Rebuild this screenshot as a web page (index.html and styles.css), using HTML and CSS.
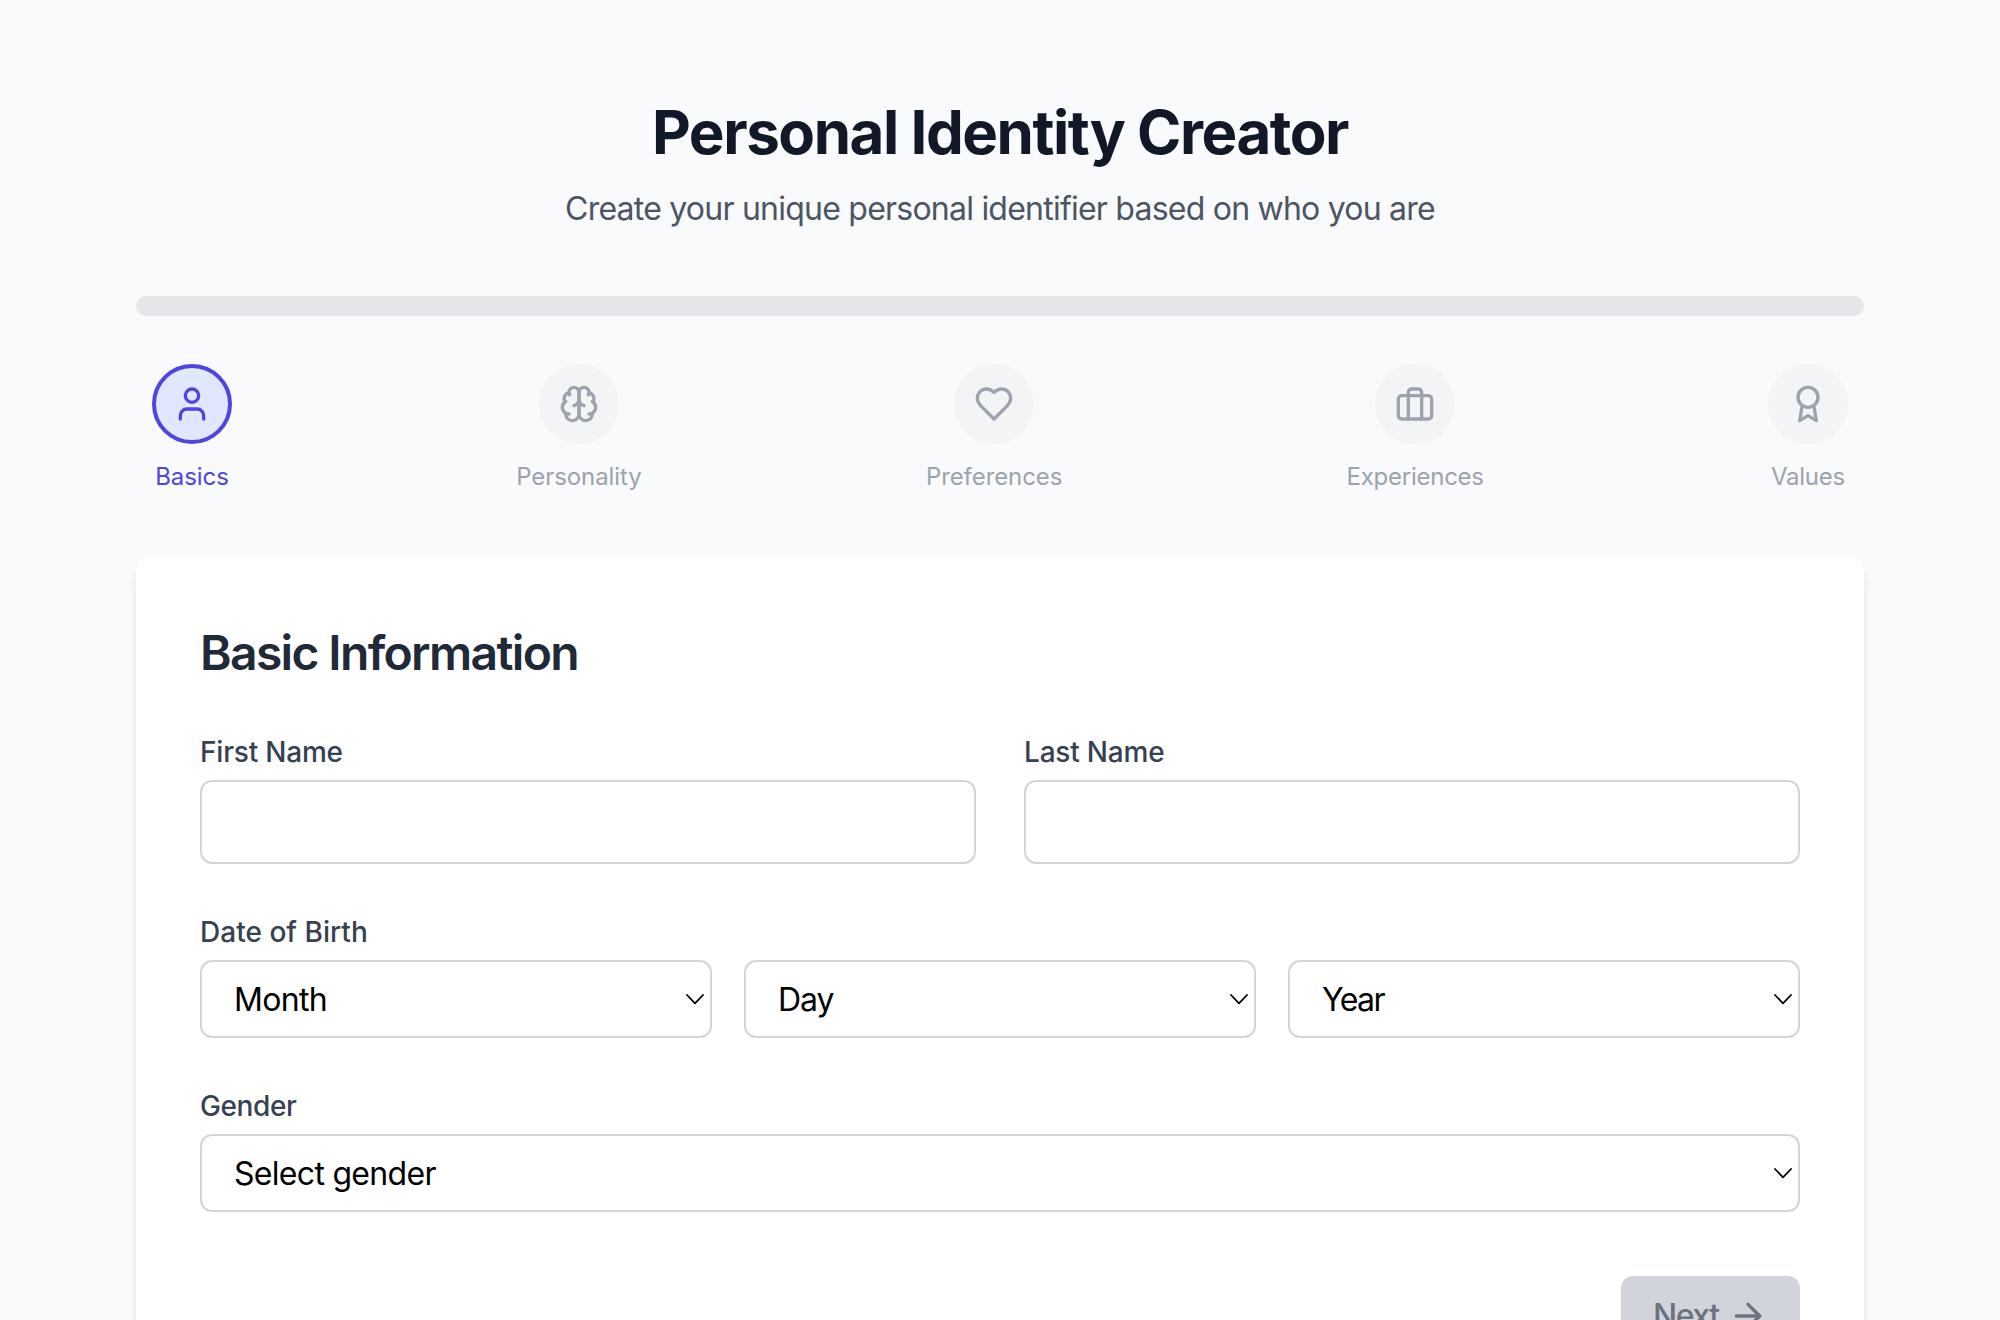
FILE: index.html
```html
<!DOCTYPE html>
<html lang="en">
<head>
<meta charset="utf-8">
<title>Personal Identity Creator</title>
<link rel="stylesheet" href="styles.css">
</head>
<body>
<main class="page">
  <header class="header">
    <h1 class="title">Personal Identity Creator</h1>
    <p class="subtitle">Create your unique personal identifier based on who you are</p>
  </header>
  <div class="progress"></div>
  <nav class="steps">
    <div class="step active">
      <span class="circle"><svg class="icon" viewBox="0 0 24 24"><path d="M19 21v-2a4 4 0 0 0-4-4H9a4 4 0 0 0-4 4v2"/><circle cx="12" cy="7" r="4"/></svg></span>
      <span class="step-label">Basics</span>
    </div>
    <div class="step">
      <span class="circle"><svg class="icon" viewBox="0 0 24 24"><path d="M12 5a3 3 0 1 0-5.997.125 4 4 0 0 0-2.526 5.77 4 4 0 0 0 .556 6.588A4 4 0 1 0 12 18Z"/><path d="M12 5a3 3 0 1 1 5.997.125 4 4 0 0 1 2.526 5.77 4 4 0 0 1-.556 6.588A4 4 0 1 1 12 18Z"/><path d="M15 13a4.500 4.500 0 0 1-3-4 4.500 4.500 0 0 1-3 4"/><path d="M17.599 6.500a3 3 0 0 0 .399-1.375"/><path d="M6.003 5.125A3 3 0 0 0 6.401 6.500"/><path d="M3.477 10.896a4 4 0 0 1 .585-.396"/><path d="M19.938 10.500a4 4 0 0 1 .585.396"/><path d="M6 18a4 4 0 0 1-1.967-.516"/><path d="M19.967 17.484A4 4 0 0 1 18 18"/></svg></span>
      <span class="step-label">Personality</span>
    </div>
    <div class="step">
      <span class="circle"><svg class="icon" viewBox="0 0 24 24"><path d="M19 14c1.490-1.460 3-3.210 3-5.500A5.500 5.500 0 0 0 16.500 3c-1.760 0-3 .5-4.500 2-1.500-1.500-2.740-2-4.500-2A5.500 5.500 0 0 0 2 8.500c0 2.300 1.500 4.050 3 5.500l7 7Z"/></svg></span>
      <span class="step-label">Preferences</span>
    </div>
    <div class="step">
      <span class="circle"><svg class="icon" viewBox="0 0 24 24"><path d="M16 21V5a2 2 0 0 0-2-2h-4a2 2 0 0 0-2 2v16"/><rect x="2" y="7" width="20" height="14" rx="2"/></svg></span>
      <span class="step-label tight">Experiences</span>
    </div>
    <div class="step">
      <span class="circle"><svg class="icon" viewBox="0 0 24 24"><circle cx="12" cy="8" r="6"/><path d="M15.477 12.890 17 22l-5-3-5 3 1.523-9.110"/></svg></span>
      <span class="step-label tight">Values</span>
    </div>
  </nav>
  <form class="card">
    <h2 class="card-title">Basic Information</h2>
    <div class="row two">
      <div class="field">
        <label class="label" for="first">First Name</label>
        <input class="input" id="first" type="text">
      </div>
      <div class="field">
        <label class="label" for="last">Last Name</label>
        <input class="input" id="last" type="text">
      </div>
    </div>
    <div class="field">
      <label class="label birth" for="month">Date of Birth</label>
      <div class="row three">
        <div class="select-wrap">
          <select class="select" id="month"><option>Month</option></select>
          <svg class="chevron" viewBox="0 0 18 12"><path d="M1 2 9 10.300 17 2"/></svg>
        </div>
        <div class="select-wrap">
          <select class="select day"><option>Day</option></select>
          <svg class="chevron" viewBox="0 0 18 12"><path d="M1 2 9 10.300 17 2"/></svg>
        </div>
        <div class="select-wrap">
          <select class="select year"><option>Year</option></select>
          <svg class="chevron" viewBox="0 0 18 12"><path d="M1 2 9 10.300 17 2"/></svg>
        </div>
      </div>
    </div>
    <div class="field">
      <label class="label gender" for="gender">Gender</label>
      <div class="select-wrap">
        <select class="select" id="gender"><option>Select gender</option></select>
        <svg class="chevron" viewBox="0 0 18 12"><path d="M1 2 9 10.300 17 2"/></svg>
      </div>
    </div>
    <div class="actions">
      <button class="next" type="button" disabled><span class="next-text">Next</span><svg class="icon" viewBox="0 0 24 24"><path d="M5 12h14"/><path d="m12 5 7 7-7 7"/></svg></button>
    </div>
  </form>
</main>
</body>
</html>
```
FILE: styles.css
```css
* { box-sizing: border-box; margin: 0; }

html, body { height: 100%; overflow: hidden; }

body {
  background: #f9fafc;
  font-family: Inter, "Liberation Sans", sans-serif;
  font-size: 32px;
  line-height: 48px;
}

.page { width: 1728px; margin: 0 auto; padding-top: 96px; }

.header { text-align: center; margin-bottom: 63px; }

.title {
  font-size: 60px;
  line-height: 72px;
  font-weight: 700;
  letter-spacing: -1.45px;
  color: #111827;
}

.subtitle { margin-top: 17px; letter-spacing: -0.77px; color: #4b5563; }

.progress { height: 20px; border-radius: 10px; background: #e5e6ea; }

.steps {
  display: flex;
  justify-content: space-between;
  margin: 48px 0 63px;
  padding: 0 16px;
}

.step {
  display: flex;
  flex-direction: column;
  align-items: center;
  gap: 17px;
  color: #9ca3af;
}

.step.active { color: #4f46df; }

.circle {
  display: flex;
  align-items: center;
  justify-content: center;
  width: 80px;
  height: 80px;
  border-radius: 50%;
  background: #f3f4f6;
}

.active .circle { background: #e0e7ff; border: 4px solid #4f46df; }

.icon {
  width: 40px;
  height: 40px;
  fill: none;
  stroke: currentColor;
  stroke-width: 2;
  stroke-linecap: round;
  stroke-linejoin: round;
}

.step-label { font-size: 24px; line-height: 32px; letter-spacing: -0.08px; }
.step-label.tight { letter-spacing: -0.25px; }

.card {
  display: flex;
  flex-direction: column;
  gap: 48px;
  padding: 64px;
  border-radius: 16px;
  background: #fff;
  box-shadow: 0 8px 12px -2px rgba(0, 0, 0, .1), 0 4px 8px -4px rgba(0, 0, 0, .1);
}

.card-title {
  margin: 1px 0 -1px;
  font-size: 48px;
  line-height: 64px;
  font-weight: 600;
  letter-spacing: -1.65px;
  color: #1f2937;
}

.row { display: grid; }
.two { grid-template-columns: repeat(2, 1fr); gap: 48px; }
.three { grid-template-columns: repeat(3, 1fr); gap: 32px; }

.field { display: flex; flex-direction: column; gap: 8px; }

.label {
  font-size: 28px;
  line-height: 40px;
  font-weight: 500;
  letter-spacing: -0.2px;
  color: #374151;
}
.label.birth { letter-spacing: 0.03px; }
.label.gender { letter-spacing: -0.4px; }

.input, .select {
  width: 100%;
  border: 2px solid #d1d5db;
  border-radius: 12px;
  background: #fff;
  font: inherit;
  color: #000;
}

.input { height: 84px; padding: 0 32px; }

.select {
  height: 78px;
  padding: 2px 32px 0;
  appearance: none;
  letter-spacing: -0.7px;
}
.select.day { letter-spacing: -1px; }
.select.year { letter-spacing: -1.6px; }

.select-wrap { display: grid; align-items: center; }
.select-wrap > * { grid-area: 1 / 1; }

.chevron {
  justify-self: end;
  width: 18px;
  height: 12px;
  margin-right: 8px;
  fill: none;
  stroke: #000;
  stroke-width: 1.8;
  stroke-linecap: round;
  stroke-linejoin: round;
  pointer-events: none;
}

.actions { display: flex; justify-content: flex-end; margin-top: 16px; }

.next {
  display: flex;
  align-items: center;
  justify-content: space-between;
  width: 179px;
  height: 80px;
  padding: 0 32px;
  border: 0;
  border-radius: 12px;
  background: #d1d5db;
  font: inherit;
  font-weight: 500;
  color: #6b7280;
}
.next-text { letter-spacing: -1.5px; }
```
